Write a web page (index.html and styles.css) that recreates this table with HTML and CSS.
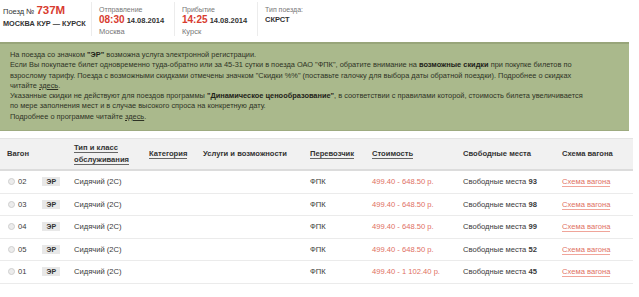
FILE: index.html
```html
<!DOCTYPE html>
<html lang="ru">
<head>
<meta charset="utf-8">
<link rel="stylesheet" href="styles.css">
</head>
<body>
<div class="page">
  <div class="trip">
    <div class="tcol first">
      <div class="line1">Поезд № <span class="num">737М</span></div>
      <div class="route">МОСКВА КУР — КУРСК</div>
    </div>
    <div class="tcol">
      <div class="lbl">Отправление</div>
      <div class="dt"><span class="time">08:30</span> 14.08.2014</div>
      <div class="city">Москва</div>
    </div>
    <div class="tcol">
      <div class="lbl">Прибытие</div>
      <div class="dt"><span class="time">14:25</span> 14.08.2014</div>
      <div class="city">Курск</div>
    </div>
    <div class="tcol">
      <div class="lbl">Тип поезда:</div>
      <div class="dt">СКРСТ</div>
    </div>
  </div>

  <div class="notice">
    <p>На поезда со значком <b>"ЭР"</b> возможна услуга электронной регистрации.</p>
    <p>Если Вы покупаете билет одновременно туда-обратно или за 45-31 сутки в поезда ОАО "ФПК", обратите внимание на <b>возможные скидки</b> при покупке билетов по<br>взрослому тарифу. Поезда с возможными скидками отмечены значком "Скидки %%" (поставьте галочку для выбора даты обратной поездки). Подробнее о скидках<br>читайте <a href="#">здесь</a>.</p>
    <p>Указанные скидки не действуют для поездов программы <b>"Динамическое ценообразование"</b>, в соответствии с правилами которой, стоимость билета увеличивается<br>по мере заполнения мест и в случае высокого спроса на конкретную дату.</p>
    <p>Подробнее о программе читайте <a href="#">здесь</a>.</p>
  </div>

  <div class="table">
    <div class="row head">
      <div>Вагон</div>
      <div><span class="sort">Тип и класс<br>обслуживания</span></div>
      <div><span class="sort">Категория</span></div>
      <div>Услуги и возможности</div>
      <div><span class="sort">Перевозчик</span></div>
      <div><span class="sort">Стоимость</span></div>
      <div>Свободные места</div>
      <div>Схема вагона</div>
    </div>
    <div class="row">
      <div class="car"><span class="radio"></span>02<span class="er">ЭР</span></div>
      <div>Сидячий (2С)</div><div></div><div></div>
      <div>ФПК</div>
      <div class="price">499.40 - 648.50 р.</div>
      <div>Свободные места <b>93</b></div>
      <div><a href="#" class="scheme">Схема вагона</a></div>
    </div>
    <div class="row">
      <div class="car"><span class="radio"></span>03<span class="er">ЭР</span></div>
      <div>Сидячий (2С)</div><div></div><div></div>
      <div>ФПК</div>
      <div class="price">499.40 - 648.50 р.</div>
      <div>Свободные места <b>98</b></div>
      <div><a href="#" class="scheme">Схема вагона</a></div>
    </div>
    <div class="row">
      <div class="car"><span class="radio"></span>04<span class="er">ЭР</span></div>
      <div>Сидячий (2С)</div><div></div><div></div>
      <div>ФПК</div>
      <div class="price">499.40 - 648.50 р.</div>
      <div>Свободные места <b>99</b></div>
      <div><a href="#" class="scheme">Схема вагона</a></div>
    </div>
    <div class="row">
      <div class="car"><span class="radio"></span>05<span class="er">ЭР</span></div>
      <div>Сидячий (2С)</div><div></div><div></div>
      <div>ФПК</div>
      <div class="price">499.40 - 648.50 р.</div>
      <div>Свободные места <b>52</b></div>
      <div><a href="#" class="scheme">Схема вагона</a></div>
    </div>
    <div class="row">
      <div class="car"><span class="radio"></span>01<span class="er">ЭР</span></div>
      <div>Сидячий (2С)</div><div></div><div></div>
      <div>ФПК</div>
      <div class="price">499.40 - 1 102.40 р.</div>
      <div>Свободные места <b>45</b></div>
      <div><a href="#" class="scheme">Схема вагона</a></div>
    </div>
  </div>
</div>
</body>
</html>
```
FILE: styles.css
```css
html, body { margin: 0; padding: 0; background: #fff; }
body { font-family: "Liberation Sans", Arial, sans-serif; color: #333; font-size: 8px; }
.page { width: 639px; }

.trip { display: flex; height: 38px; padding-top: 2px; box-sizing: border-box; }
.tcol { width: 83px; border-left: 1px solid #ececec; padding: 3px 0 0 7px; box-sizing: border-box; height: 34px; }
.tcol.first { width: 91px; border-left: 0; padding-left: 3px; }
.line1 { font-size: 7.5px; color: #333; line-height: 11px; }
.num { color: #d83c30; font-weight: bold; font-size: 11.5px; }
.route { font-weight: bold; font-size: 7.3px; margin-top: 2px; color: #333; }
.lbl { color: #777; font-size: 7px; line-height: 9px; }
.dt { font-weight: bold; font-size: 7.5px; line-height: 12px; color: #333; }
.time { color: #d83c30; font-size: 10px; }
.city { color: #777; font-size: 7.5px; line-height: 9px; }

.notice { margin-top: 4px; width: 629px; box-sizing: border-box; background: #aab98c; border-top: 2px solid #98a57a; border-bottom: 1px solid #9eab80; padding: 6px 10px 9px; color: #2e3325; font-size: 7.4px; line-height: 10.3px; height: 89px; }
.notice p { margin: 0; white-space: nowrap; }
.notice b { color: #1e2218; }
.notice a { color: #2e3325; text-decoration: underline; }

.table { margin-top: 7px; width: 633px; }
.row { display: grid; grid-template-columns: 67px 75px 54px 107px 62px 91px 99px 71px; padding-left: 7px; align-items: center; height: 22.5px; border-bottom: 1px solid #ebebeb; box-sizing: border-box; font-size: 7.6px; color: #3a3a3a; }
.row.head { height: 33px; background: #f1f1f1; border-top: 1px solid #e4e4e4; border-bottom: 2px solid #dcdcdc; font-weight: bold; color: #333; line-height: 12px; }
.sort { border-bottom: 1px solid #666; }
.car { display: flex; align-items: center; }
.radio { width: 5px; height: 5px; border-radius: 50%; background: #ececec; border: 1px solid #cfcfcf; margin: 0 3px 0 1px; }
.er { background: #e8e8e8; font-weight: bold; font-size: 7px; padding: 1px 4px; margin-left: 16px; color: #333; }
.price { color: #e0705f; }
.scheme { color: #e0705f; text-decoration: none; border-bottom: 1px solid #f0a59a; }
```
